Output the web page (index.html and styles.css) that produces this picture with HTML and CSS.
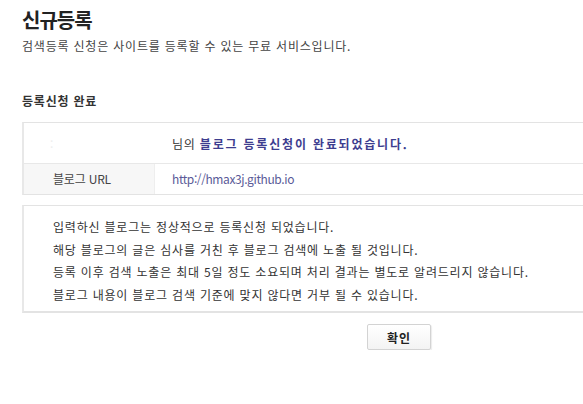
FILE: index.html
```html
<!DOCTYPE html>
<html lang="ko">
<head>
  <meta charset="UTF-8" />
  <title>신규등록</title>
  <link rel="stylesheet" href="styles.css">
</head>
<body>
  <div class="page">
    <h1>신규등록</h1>
    <p class="desc">검색등록 신청은 사이트를 등록할 수 있는 무료 서비스입니다.</p>

    <h2>등록신청 완료</h2>

    <!-- 신청 결과 -->
    <div class="result">
      <div class="result-head">
        <span class="blog-name">:</span>
        <span class="msg">님의 <strong>블로그 등록신청이 완료되었습니다.</strong></span>
      </div>
      <div class="result-row">
        <div class="label">블로그 URL</div>
        <div class="value">http://hmax3j.github.io</div>
      </div>
    </div>

    <!-- 안내 -->
    <div class="notice">
      <p>입력하신 블로그는 정상적으로 등록신청 되었습니다.</p>
      <p>해당 블로그의 글은 심사를 거친 후 블로그 검색에 노출 될 것입니다.</p>
      <p>등록 이후 검색 노출은 최대 5일 정도 소요되며 처리 결과는 별도로 알려드리지 않습니다.</p>
      <p>블로그 내용이 블로그 검색 기준에 맞지 않다면 거부 될 수 있습니다.</p>
    </div>

    <div class="actions">
      <button type="button">확인</button>
    </div>
  </div>
</body>
</html>
```

FILE: styles.css
```css
* {
  box-sizing: border-box;
  margin: 0;
  padding: 0;
}

body {
  font-family: "Noto Sans CJK KR", "Noto Sans", sans-serif;
  font-size: 12px;
  letter-spacing: 0.8px;
  color: #333;
  background-color: #fff;
  overflow: hidden;
}

.page {
  width: 583px;
  padding: 6px 0 0 22px;
}

h1 {
  font-size: 20px;
  font-weight: bold;
  letter-spacing: -1px;
  line-height: 28px;
  color: #222;
}

.desc {
  margin-top: 3px;
  line-height: 18px;
  color: #444;
}

h2 {
  margin-top: 37px;
  font-size: 12px;
  font-weight: bold;
  line-height: 18px;
  color: #333;
}

.result {
  margin-top: 12px;
  margin-right: -60px;
  border: 1px solid #e3e3e3;
  border-left: 2px solid #e8e8e8;
}

.result-head {
  display: flex;
  align-items: center;
  height: 41px;
  border-bottom: 1px solid #e8e8e8;
}

.blog-name {
  width: 148px;
  padding-left: 26px;
  color: #eee;
}

.msg {
  color: #333;
}

.msg strong {
  color: #3d3d8f;
  letter-spacing: 1.8px;
}

.result-row {
  display: flex;
  height: 30px;
}

.label {
  width: 131px;
  padding-left: 29px;
  line-height: 30px;
  letter-spacing: -0.2px;
  background-color: #f7f7f7;
  border-right: 1px solid #eee;
  color: #444;
}

.value {
  padding-left: 17px;
  line-height: 30px;
  letter-spacing: -0.4px;
  color: #5a5a98;
}

.notice {
  margin-top: 10px;
  margin-right: -60px;
  padding: 10px 0 5px 29px;
  border: 1px solid #e3e3e3;
  border-left: 2px solid #e8e8e8;
  border-bottom: 2px solid #e3e3e3;
}

.notice p {
  line-height: 22.5px;
  color: #333;
}

.actions {
  padding: 11px 0 0 345px;
}

button {
  width: 64px;
  height: 26px;
  font-family: inherit;
  font-size: 12px;
  font-weight: bold;
  letter-spacing: 1px;
  color: #222;
  background: linear-gradient(#fff, #f3f3f3);
  border: 1px solid #d3d3d3;
  border-radius: 2px;
  box-shadow: 1px 1px 1px rgba(0, 0, 0, 0.08);
  cursor: pointer;
}
```
